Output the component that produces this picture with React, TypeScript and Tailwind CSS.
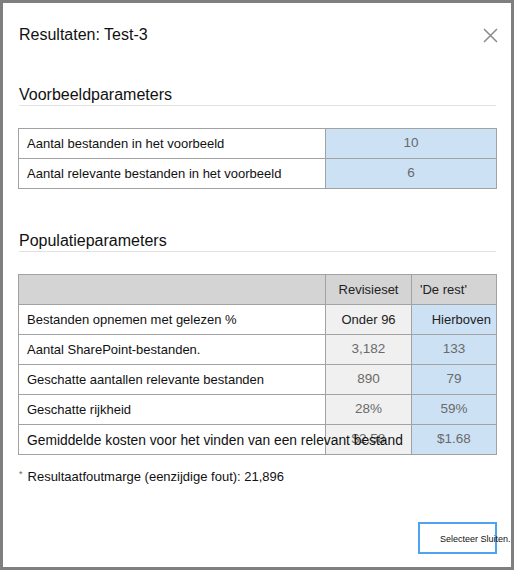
import React from 'react';

const font = { fontFamily: '"Liberation Sans", Arial, sans-serif' };

const sampleRows = [
  { label: 'Aantal bestanden in het voorbeeld', value: '10' },
  { label: 'Aantal relevante bestanden in het voorbeeld', value: '6' },
];

const popRows = [
  { label: 'Aantal SharePoint-bestanden.', a: '3,182', b: '133' },
  { label: 'Geschatte aantallen relevante bestanden', a: '890', b: '79' },
  { label: 'Geschatte rijkheid', a: '28%', b: '59%' },
];

const cell = 'border border-[#a2a2a2] h-[30px] p-0';

const SectionHeading = ({ children }: { children: React.ReactNode }) => (
  <h2 className="ml-[1px] mr-[1px] h-[21px] border-b border-[#e2e2e2] text-[16px] leading-[20px] text-[#111]">{children}</h2>
);

export default function App() {
  return (
    <div className="bg-white w-[516px] h-[572px]" style={font}>
      <div className="w-[514px] h-[570px] border-[3px] border-[#7f7f7f] bg-white pt-[22px] pl-[15px] pr-[14px] flex flex-col">
        <div className="flex items-center justify-between h-[20px] pl-[1px]">
          <h1 className="text-[16px] leading-[20px] text-[#111]">Resultaten: Test-3</h1>
          <svg width="15" height="15" viewBox="0 0 15 15" className="mr-[-1px]">
            <path d="M1 1 L14 14 M14 1 L1 14" stroke="#8a8a8a" strokeWidth="1.5" />
          </svg>
        </div>

        <div className="mt-[40px]">
          <SectionHeading>Voorbeeldparameters</SectionHeading>
        </div>

        <table className="mt-[22px] border-collapse w-[479px] text-[13px] table-fixed">
          <tbody>
            {sampleRows.map((r) => (
              <tr key={r.label}>
                <td className={`${cell} w-[307px] pl-[8px] text-[#111]`}>{r.label}</td>
                <td className={`${cell} bg-[#cce1f4] text-center text-[#6a6a6a] text-[13.5px]`}>{r.value}</td>
              </tr>
            ))}
          </tbody>
        </table>

        <div className="mt-[42px]">
          <SectionHeading>Populatieparameters</SectionHeading>
        </div>

        <table className="mt-[22px] border-collapse w-[479px] text-[13px] table-fixed">
          <tbody>
            <tr className="bg-[#d4d4d4]">
              <td className={`${cell} w-[307px]`}></td>
              <td className={`${cell} w-[86px] text-center text-[#222]`}>Revisieset</td>
              <td className={`${cell} pl-[8px] text-[#222]`}>'De rest'</td>
            </tr>
            <tr>
              <td className={`${cell} pl-[8px] text-[#111]`}>Bestanden opnemen met gelezen %</td>
              <td className={`${cell} bg-[#f0f0f0] text-center text-[#222]`}>Onder 96</td>
              <td className={`${cell} bg-[#cce1f4] text-right pr-[5px] text-[#222]`}>Hierboven</td>
            </tr>
            {popRows.map((r) => (
              <tr key={r.label}>
                <td className={`${cell} pl-[8px] text-[#111]`}>{r.label}</td>
                <td className={`${cell} bg-[#f0f0f0] text-center text-[#6a6a6a] text-[13.5px]`}>{r.a}</td>
                <td className={`${cell} bg-[#cce1f4] text-center text-[#6a6a6a] text-[13.5px]`}>{r.b}</td>
              </tr>
            ))}
            <tr>
              <td className={`${cell} pl-[8px] text-[#111] relative overflow-visible`}>
                <span className="absolute left-[8px] top-[6px] whitespace-nowrap text-[13.8px] z-10">
                  Gemiddelde kosten voor het vinden van een relevant bestand
                </span>
              </td>
              <td className={`${cell} bg-[#f0f0f0] text-center text-[#6a6a6a] text-[13.5px]`}>$2.58</td>
              <td className={`${cell} bg-[#cce1f4] text-center text-[#6a6a6a] text-[13.5px]`}>$1.68</td>
            </tr>
          </tbody>
        </table>

        <p className="mt-[12px] pl-[1px] h-[20px] text-[13px] leading-[20px] text-[#111] flex">
          <span className="text-[9px] leading-[14px] text-[#666] mr-[5px]">*</span>
          Resultaatfoutmarge (eenzijdige fout): 21,896
        </p>

        <div className="mt-[35px] flex justify-end">
          <button className="w-[79px] h-[32px] border-2 border-[#4ea3ee] bg-white relative">
            <span className="absolute left-[20px] top-[9px] whitespace-nowrap text-[9px] text-[#111]">Selecteer Sluiten.</span>
          </button>
        </div>
      </div>
    </div>
  );
}
